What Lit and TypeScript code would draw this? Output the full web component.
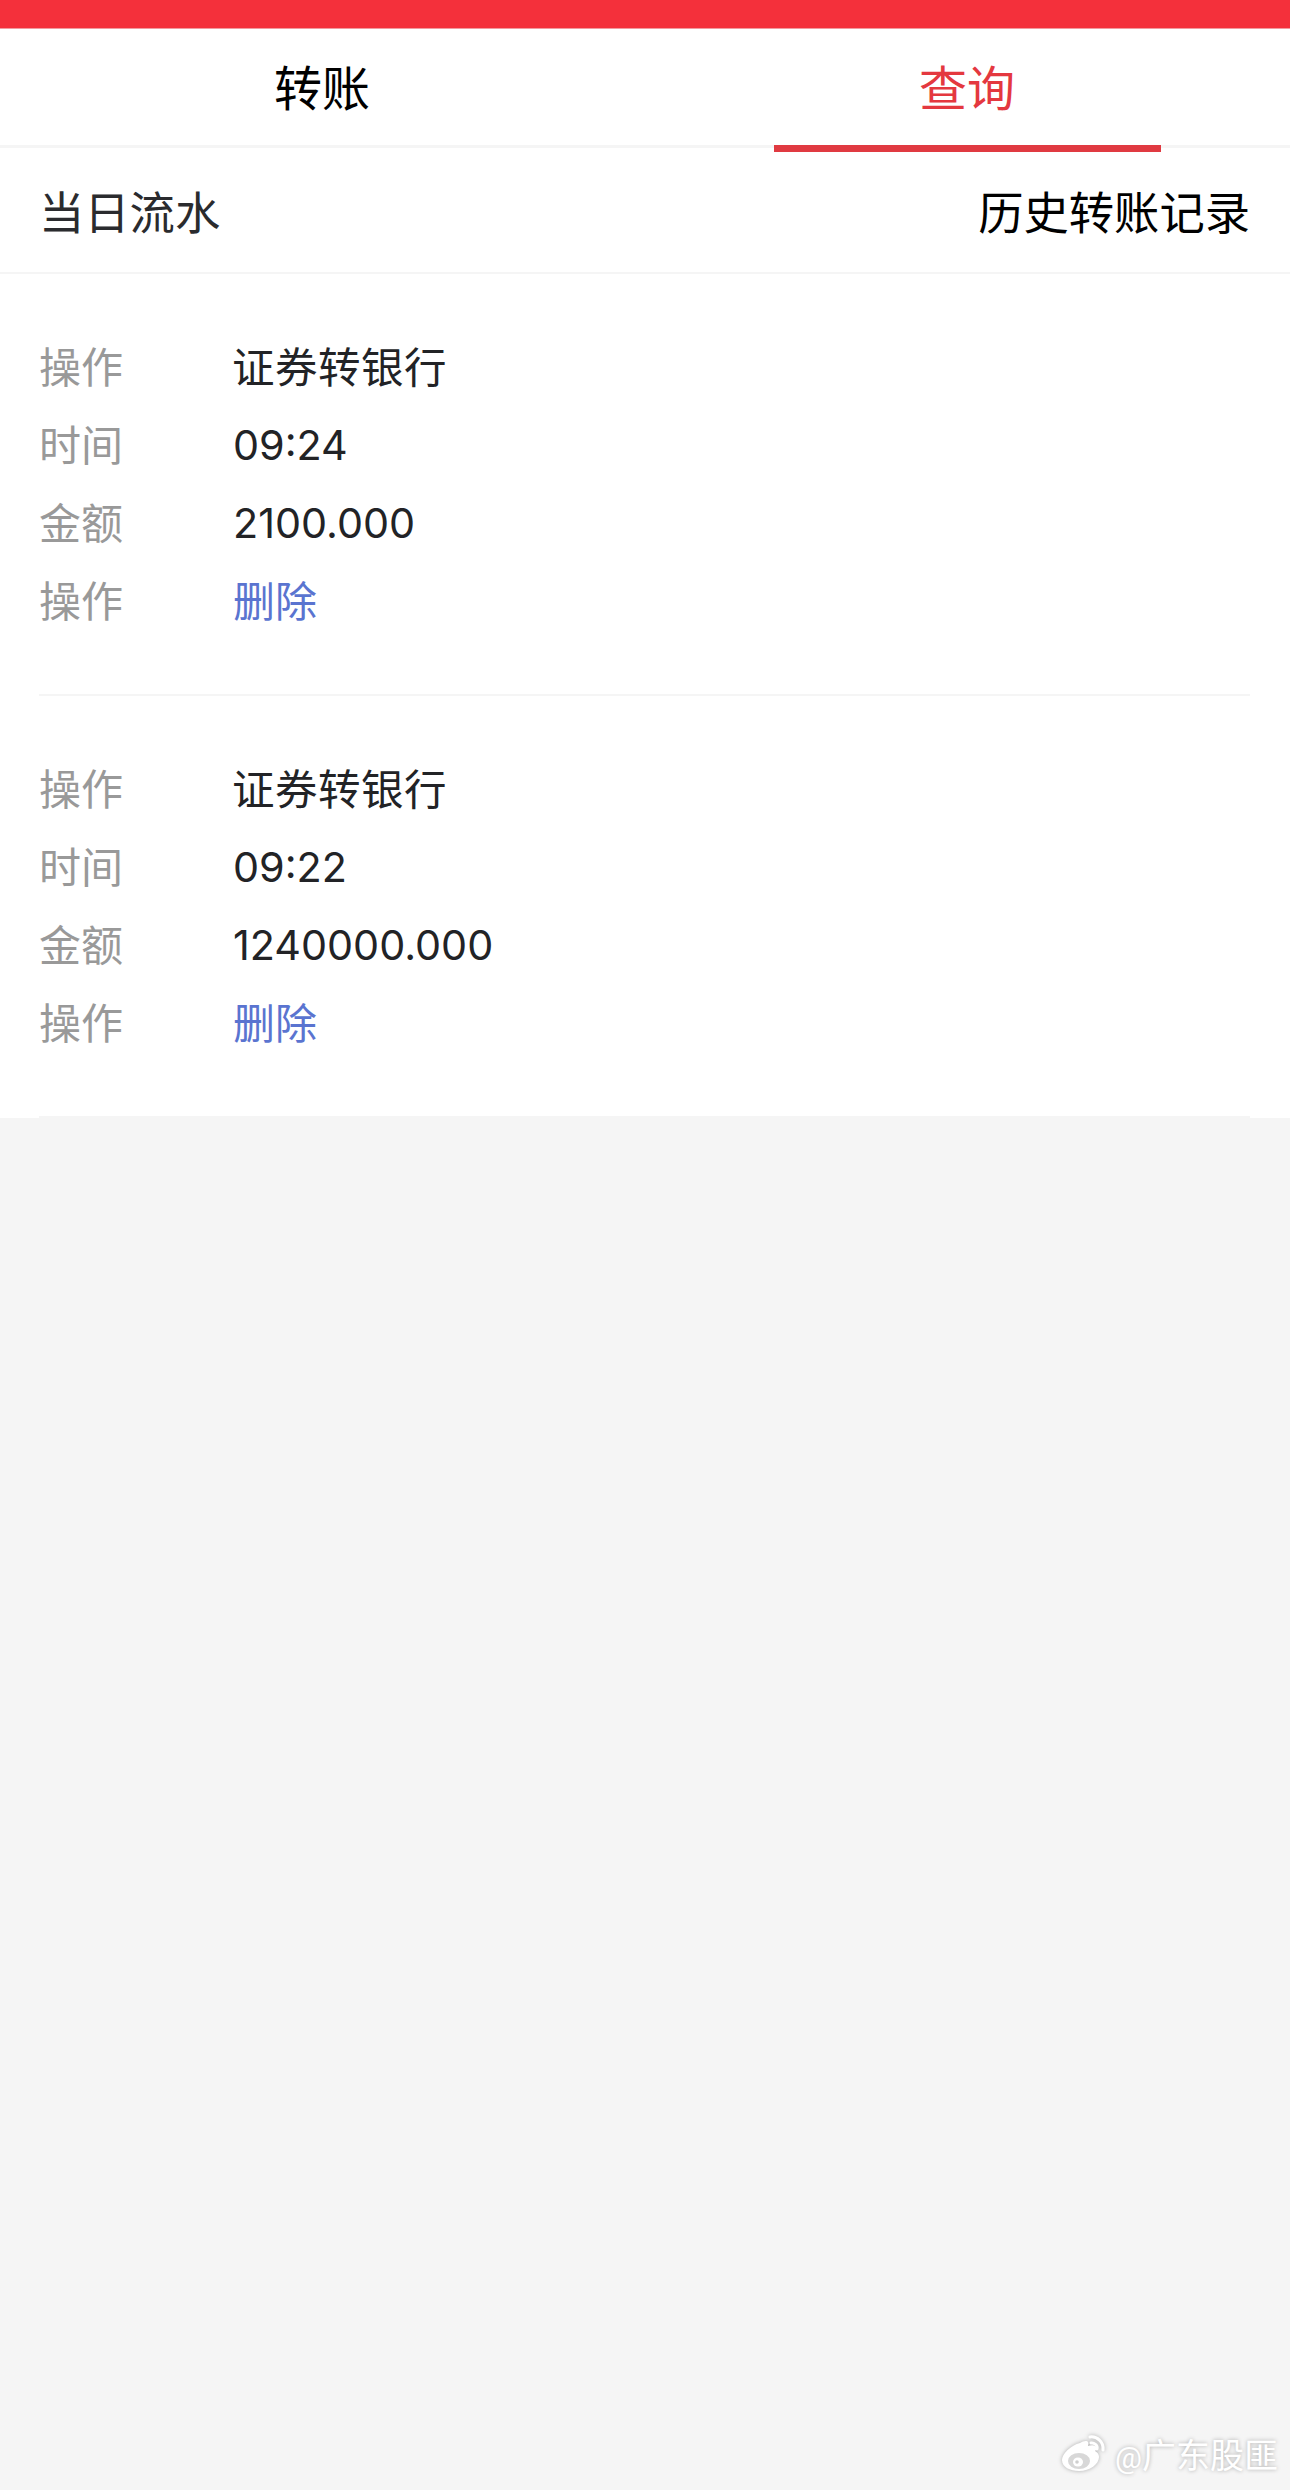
import { LitElement, html, css } from "lit";
import { customElement } from "lit/decorators.js";

const records = [
  { time: "09:24", amount: "2100.000" },
  { time: "09:22", amount: "1240000.000" },
];

@customElement("app-root")
export class AppRoot extends LitElement {
  static styles = css`
    :host {
      display: block;
      position: relative;
      width: 1290px;
      height: 2490px;
      overflow: hidden;
      background: #f5f5f5;
      font-family: "Roboto", "Noto Sans CJK SC", sans-serif;
    }
    .status { height: 28px; background: #f4303b; border-bottom: 1px solid #f29a9f; }
    .tabs {
      display: grid;
      grid-template-columns: 1fr 1fr;
      height: 116px;
      background: #fff;
      border-bottom: 3px solid #f5f5f5;
    }
    .tab {
      position: relative;
      display: flex;
      align-items: center;
      justify-content: center;
      box-sizing: border-box;
      padding-bottom: 5px;
      padding-right: 1px;
      font-size: 48px;
      color: #000;
    }
    .tab.active { color: #e4383f; }
    .tab.active::after {
      content: "";
      position: absolute;
      left: 129px;
      width: 387px;
      bottom: -7px;
      height: 7px;
      background: #e03a41;
    }
    .sub {
      display: flex;
      justify-content: space-between;
      align-items: center;
      height: 124px;
      padding: 0 40px 0 39px;
      background: #fff;
      border-bottom: 2px solid #f5f5f5;
      font-size: 45.3px;
      color: #000;
    }
    .sub .today { color: #2a2b2e; }
    .list { padding: 0 40px 0 0; background: #fff; }
    .card { margin-left: 39px; padding: 54px 0; border-bottom: 2px solid #f5f5f5; }
    .row {
      display: grid;
      grid-template-columns: 193px 1fr;
      align-items: center;
      box-sizing: border-box;
      height: 78px;
      padding-bottom: 6px;
      font-size: 42.5px;
      letter-spacing: 0.5px;
      color: #222326;
    }
    .label { color: #999; font-size: 42px; letter-spacing: 0; }
    .link { color: #5a74d0; font-size: 42px; letter-spacing: 0; margin-left: 1px; }
    .num {
      font-family: "Inter", "Roboto", sans-serif;
      font-size: 41.3px;
      letter-spacing: 0;
      padding-top: 6px;
      margin-left: 1px;
    }
    .mark {
      position: absolute;
      right: 12px;
      bottom: 12px;
      display: flex;
      align-items: center;
      gap: 8px;
      font-size: 34px;
      color: #fff;
      text-shadow: 0 0 4px rgba(0, 0, 0, 0.3);
    }
    .mark svg { filter: drop-shadow(0 0 2px rgba(0, 0, 0, 0.3)); }
    .at { font-size: 30px; }
  `;

  render() {
    return html`
      <div class="status"></div>
      <div class="tabs">
        <div class="tab">转账</div>
        <div class="tab active">查询</div>
      </div>
      <div class="sub"><span class="today">当日流水</span><span>历史转账记录</span></div>
      <div class="list">
        ${records.map(
          (r) => html`
            <div class="card">
              <div class="row"><span class="label">操作</span><span>证券转银行</span></div>
              <div class="row"><span class="label">时间</span><span class="num">${r.time}</span></div>
              <div class="row"><span class="label">金额</span><span class="num">${r.amount}</span></div>
              <div class="row"><span class="label">操作</span><span class="link">删除</span></div>
            </div>
          `
        )}
      </div>
      <div class="mark">
        <svg width="46" height="40" viewBox="0 0 46 40">
          <path fill="#fff" d="M19 9c3-2 7-3 8-1 1 1 0 3 0 4 3-1 7-1 8 1 1 2 0 3-1 4 2 1 4 3 4 6 0 7-9 14-20 14C9 37 1 33 1 26c0-6 9-15 18-17z"/>
          <ellipse cx="18" cy="27" rx="11" ry="8" fill="#d8d8d8"/>
          <ellipse cx="17" cy="28" rx="5" ry="4.5" fill="#fff"/>
          <circle cx="16" cy="28" r="1.8" fill="#cfcfcf"/>
          <path fill="none" stroke="#fff" stroke-width="3" stroke-linecap="round" d="M29 3c7-1 14 5 13 13M30 9c3-.5 7 2 6 6"/>
        </svg>
        <span><span class="at">@</span>广东股匪</span>
      </div>
    `;
  }
}
